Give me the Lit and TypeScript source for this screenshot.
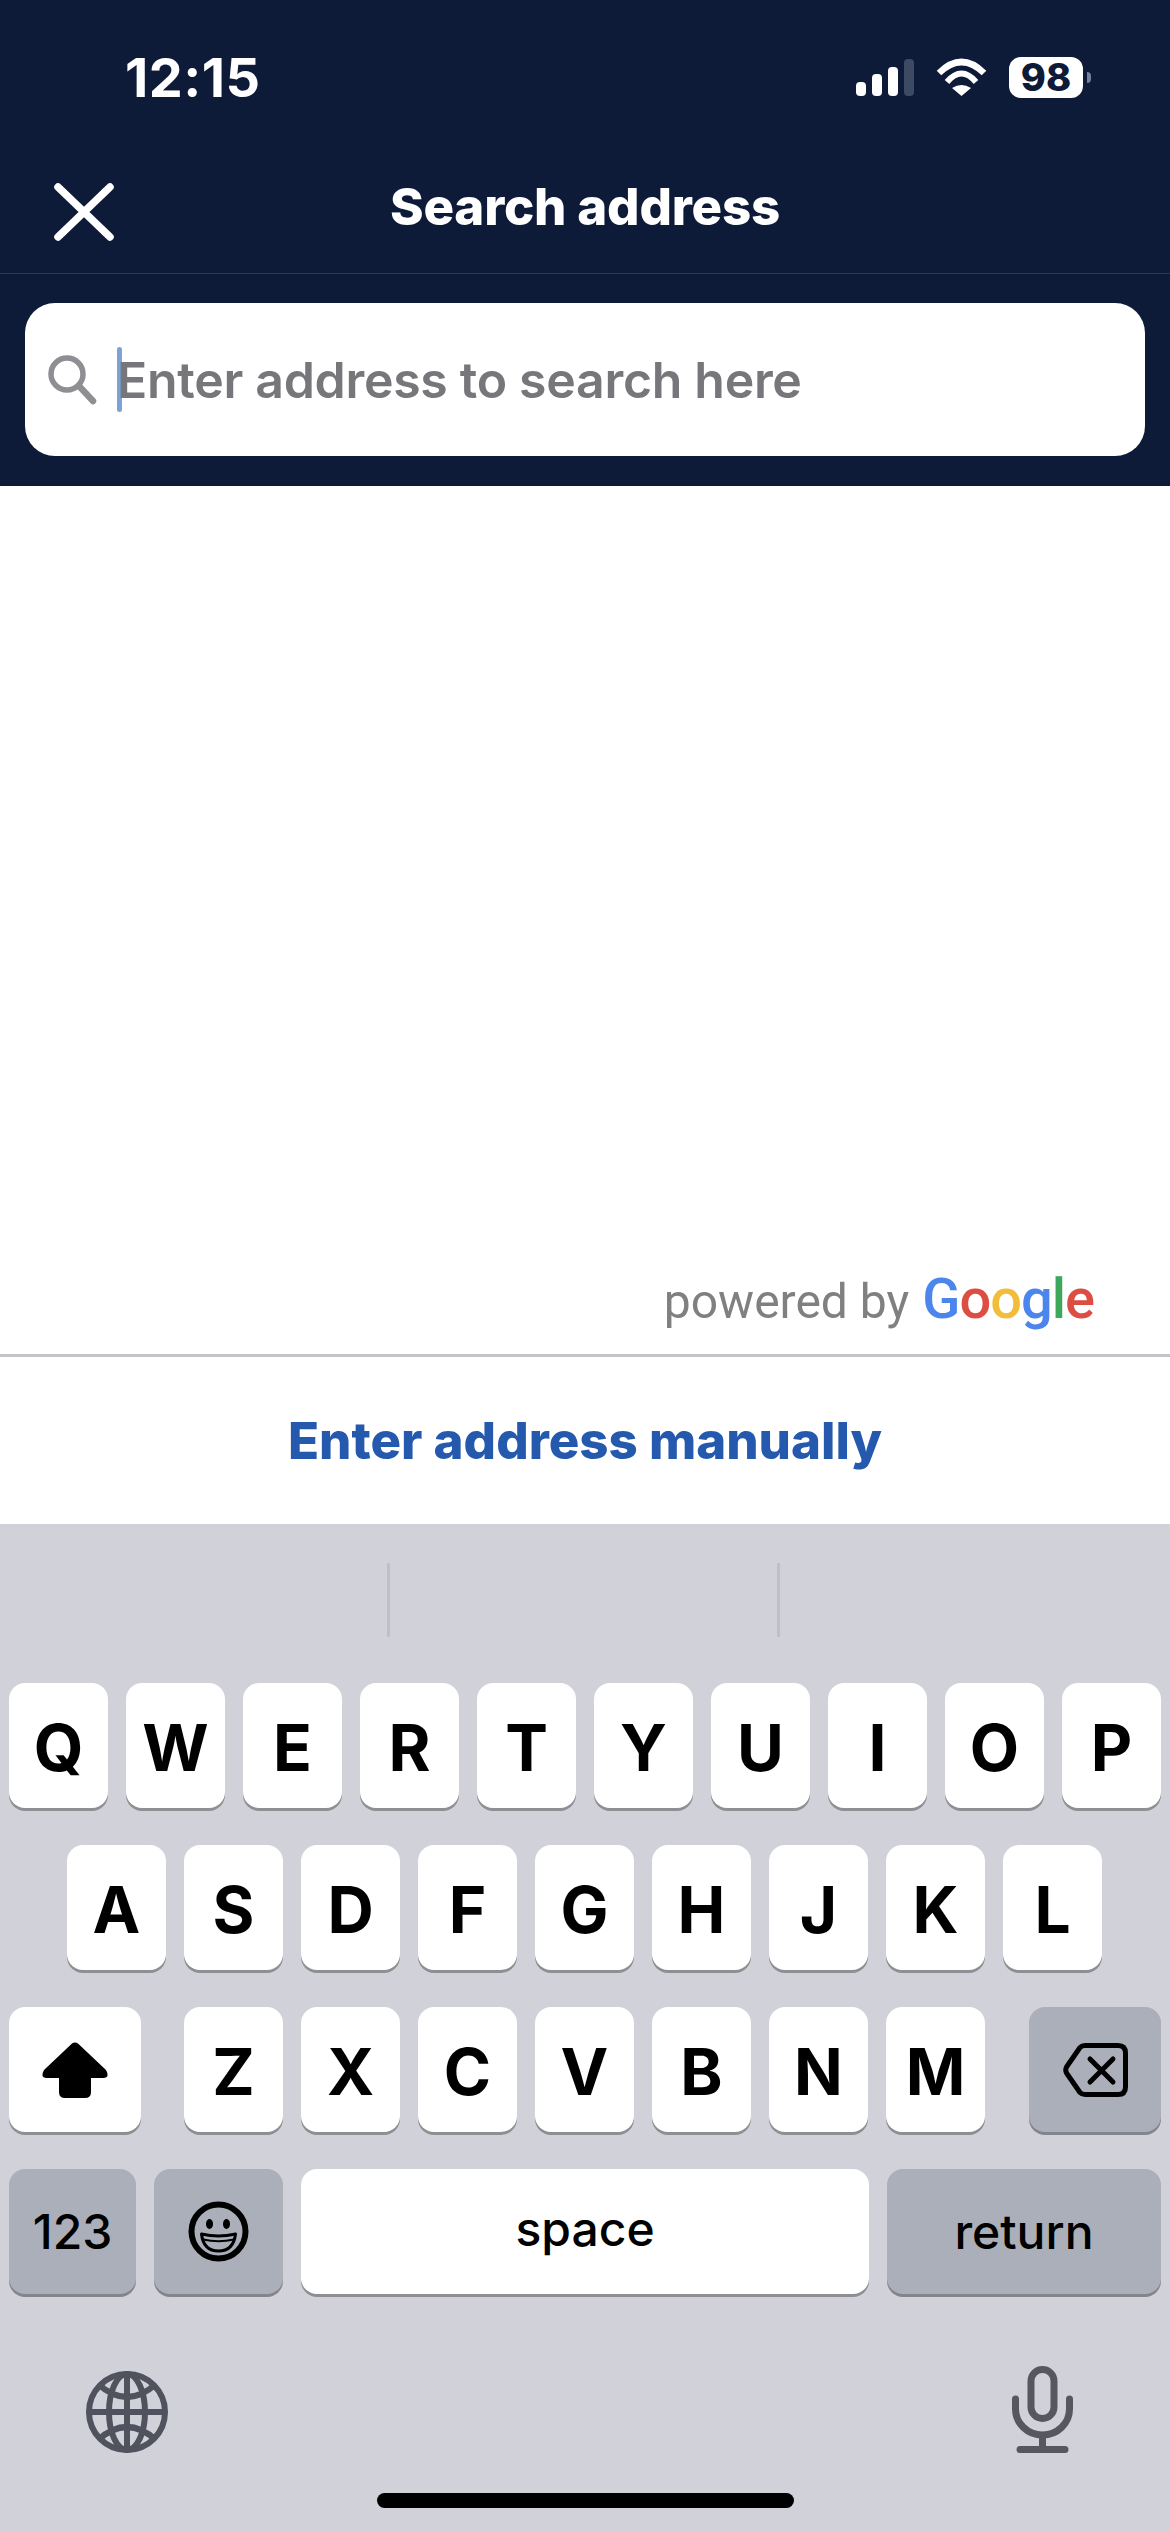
import { LitElement, html, css } from "lit";
import { customElement } from "lit/decorators.js";

const ROW_1 = ["Q", "W", "E", "R", "T", "Y", "U", "I", "O", "P"];
const ROW_2 = ["A", "S", "D", "F", "G", "H", "J", "K", "L"];
const ROW_3 = ["Z", "X", "C", "V", "B", "N", "M"];

@customElement("app-root")
export class AppRoot extends LitElement {
  static styles = css`
    :host {
      display: block;
      width: 1170px;
      height: 2532px;
      overflow: hidden;
      background: #fff;
      font-family: Inter, "Liberation Sans", sans-serif;
    }

    svg {
      display: block;
      flex: none;
      overflow: visible;
    }

    .page {
      display: flex;
      flex-direction: column;
      height: 2532px;
    }

    /* header */
    .top {
      background: #0d1b38;
      color: #fff;
    }

    .status {
      height: 150px;
      box-sizing: border-box;
      display: flex;
      justify-content: space-between;
      padding: 57px 79px 0 125px;
    }

    .time {
      font-size: 54px;
      font-weight: 700;
      line-height: 42px;
      letter-spacing: 0.5px;
    }

    .status-icons {
      display: flex;
      align-items: flex-start;
      height: 41px;
    }

    .signal {
      display: flex;
      align-items: flex-end;
      gap: 6px;
      height: 37px;
      margin-top: 2px;
    }

    .signal i {
      display: block;
      width: 10px;
      background: #fff;
      border-radius: 4px;
    }

    .signal i.off {
      background: #3d4a64;
    }

    .wifi {
      margin: 2px 22px 0 22px;
    }

    .battery {
      width: 74px;
      height: 41px;
      border-radius: 12px;
      background: #fff;
      color: #0d1b38;
      font-size: 38px;
      font-weight: 800;
      line-height: 41px;
      text-align: center;
    }

    .nub {
      width: 4px;
      height: 11px;
      margin: 15px 0 0 4px;
      border-radius: 0 6px 6px 0;
      background: #75809a;
    }

    .nav {
      height: 123px;
      display: grid;
      grid-template-columns: 1fr auto 1fr;
      align-items: center;
      padding-left: 54px;
      padding-right: 54px;
      border-bottom: 1px solid #2a3652;
    }

    .title {
      margin-bottom: 10px;
      font-size: 51px;
      font-weight: 800;
      letter-spacing: -0.2px;
    }

    .search-wrap {
      padding: 29px 25px 30px;
    }

    .search {
      height: 153px;
      border-radius: 30px;
      background: #fff;
      display: flex;
      align-items: center;
      padding-left: 22px;
    }

    .caret {
      width: 5px;
      height: 65px;
      margin-left: 20px;
      border-radius: 3px;
      background: #7ba3d8;
    }

    .placeholder {
      margin-left: -5px;
      font-size: 50px;
      font-weight: 600;
      letter-spacing: -0.3px;
      color: #77767b;
    }

    /* results */
    .results {
      flex: none;
      height: 868px;
      display: flex;
      align-items: flex-end;
      justify-content: flex-end;
      padding-right: 76px;
      box-sizing: border-box;
    }

    .powered {
      display: flex;
      align-items: baseline;
      gap: 13px;
      margin-bottom: 22px;
      font-family: Roboto, sans-serif;
      color: #808080;
      font-size: 48px;
      filter: blur(0.5px);
    }

    .google {
      font-size: 56px;
      font-weight: 500;
      letter-spacing: -1px;
    }

    .g-blue { color: #4c86ed; }
    .g-red { color: #dc4e41; }
    .g-yellow { color: #f3bd3c; }
    .g-green { color: #3da85a; }

    .manual {
      flex: none;
      height: 167px;
      border-top: 3px solid #c4c3c8;
      display: flex;
      align-items: center;
      justify-content: center;
      font-size: 51px;
      font-weight: 800;
      color: #2459ae;
    }

    /* keyboard */
    .keyboard {
      flex: 1;
      background: #d1d1d9;
      padding-top: 39px;
    }

    .suggest {
      height: 74px;
      display: grid;
      grid-template-columns: 387px 390px 1fr;
      margin-bottom: 46px;
    }

    .suggest div + div {
      border-left: 3px solid #bfbfc8;
    }

    .rows {
      display: flex;
      flex-direction: column;
      gap: 37px;
    }

    .row {
      display: flex;
      gap: 18px;
      padding: 0 9px;
    }

    .row.home {
      padding-left: 67px;
    }

    .key {
      flex: none;
      width: 99px;
      height: 125px;
      box-sizing: border-box;
      display: flex;
      align-items: center;
      justify-content: center;
      padding-top: 3px;
      border-radius: 16px;
      background: #fff;
      box-shadow: 0 3px 0 #8e8e93;
      color: #000;
      font-size: 64px;
      font-weight: 700;
    }

    .key.icon {
      padding-top: 0;
    }

    .key.shift {
      width: 132px;
      margin-right: 25px;
    }

    .key.back {
      width: 132px;
      margin-left: 26px;
    }

    .key.dark {
      background: #abafba;
      box-shadow: 0 3px 0 #84848c;
    }

    .key.label {
      padding-top: 0;
      font-size: 48px;
      font-weight: 500;
    }

    .key.w-123 { width: 127px; }
    .key.w-emoji { width: 129px; }
    .key.w-space { width: 568px; padding-bottom: 6px; }
    .key.w-return { width: 274px; }

    .tools {
      display: flex;
      justify-content: space-between;
      align-items: flex-end;
      margin-top: 72px;
      padding: 0 97px 0 86px;
    }

    .home-bar {
      width: 417px;
      height: 15px;
      margin: 40px 0 0 377px;
      border-radius: 8px;
      background: #000;
    }
  `;

  private renderStatus() {
    return html`
      <div class="status">
        <div class="time">12:15</div>
        <div class="status-icons">
          <div class="signal">
            <i style="height:14px"></i>
            <i style="height:22px"></i>
            <i style="height:29px"></i>
            <i class="off" style="height:37px"></i>
          </div>
          <svg class="wifi" width="51" height="37" viewBox="0 0 51 37" fill="none" stroke="#fff">
            <path d="M3 14 Q25.5 -8 48 14" stroke-width="6.5" />
            <path d="M11 23 Q25.5 6 40 23" stroke-width="6" />
            <path d="M25.5 37 L16 29 Q25.5 23 35 29 Z" fill="#fff" stroke="none" />
          </svg>
          <div class="battery">98</div>
          <div class="nub"></div>
        </div>
      </div>
    `;
  }

  private renderNav() {
    return html`
      <div class="nav">
        <svg width="60" height="58" viewBox="0 0 60 58" fill="none" stroke="#fff" stroke-width="7.5" stroke-linecap="round">
          <path d="M4 4 L56 54 M56 4 L4 54" />
        </svg>
        <div class="title">Search address</div>
      </div>
    `;
  }

  private renderSearch() {
    return html`
      <div class="search-wrap">
        <div class="search">
          <svg width="50" height="49" viewBox="0 0 50 49" fill="none" stroke="#8e8e93" stroke-linecap="round">
            <circle cx="20" cy="19" r="16" stroke-width="5.5" />
            <path d="M32 31 L46 46" stroke-width="6.5" />
          </svg>
          <div class="caret"></div>
          <div class="placeholder">Enter address to search here</div>
        </div>
      </div>
    `;
  }

  private renderKeyboard() {
    return html`
      <div class="keyboard">
        <div class="suggest"><div></div><div></div><div></div></div>
        <div class="rows">
          <div class="row">
            ${ROW_1.map((k) => html`<div class="key">${k}</div>`)}
          </div>
          <div class="row home">
            ${ROW_2.map((k) => html`<div class="key">${k}</div>`)}
          </div>
          <div class="row">
            <div class="key icon shift">
              <svg width="66" height="56" viewBox="0 0 66 56" fill="#000">
                <path d="M30 1.5 Q33 -0.5 36 1.5 L64 28 Q68 35 62 36 H49 V50 Q49 56 43 56 H23 Q17 56 17 50 V36 H4 Q-2 35 2 28 Z" />
              </svg>
            </div>
            ${ROW_3.map((k) => html`<div class="key">${k}</div>`)}
            <div class="key icon dark back">
              <svg width="65" height="54" viewBox="0 0 65 54" fill="none" stroke="#000" stroke-width="5" stroke-linecap="round" stroke-linejoin="round">
                <path d="M22 2.5 H55 Q62.5 2.5 62.5 10 V44 Q62.5 51.5 55 51.5 H22 Q19 51.5 17 49.5 L3.5 30 Q2 27 3.5 24 L17 4.5 Q19 2.5 22 2.5 Z" />
                <path d="M27 16 L50 39 M50 16 L27 39" />
              </svg>
            </div>
          </div>
          <div class="row">
            <div class="key dark label w-123">123</div>
            <div class="key icon dark w-emoji">
              <svg width="61" height="61" viewBox="0 0 61 61" fill="none" stroke="#000">
                <circle cx="30.5" cy="30.5" r="27" stroke-width="6" />
                <ellipse cx="21.5" cy="23" rx="3.5" ry="5" fill="#000" stroke="none" />
                <ellipse cx="38.5" cy="23" rx="3.5" ry="5" fill="#000" stroke="none" />
                <path d="M13.5 33 Q30.5 37 47.5 33 Q45.5 50 30.5 50 Q15.5 50 13.5 33 Z" stroke-width="3" stroke-linejoin="round" />
                <path d="M15 38.5 Q30.5 42 46 38.5" stroke-width="2" />
              </svg>
            </div>
            <div class="key label w-space">space</div>
            <div class="key dark label w-return">return</div>
          </div>
        </div>
        <div class="tools">
          <svg width="82" height="82" viewBox="0 0 82 82" fill="none" stroke="#50525d" stroke-width="6">
            <circle cx="41" cy="41" r="38" />
            <ellipse cx="41" cy="41" rx="18" ry="38" />
            <path d="M41 3 V79 M3 41 H79" />
            <path d="M12 13 Q41 39 70 13 M12 69 Q41 43 70 69" />
          </svg>
          <svg width="61" height="87" viewBox="0 0 61 87" fill="none" stroke="#56575f" stroke-width="7" stroke-linecap="round">
            <rect x="19" y="3.5" width="23" height="49" rx="11.5" />
            <path d="M3.5 33 V43 a27 26 0 0 0 54 0 V33" />
            <path d="M30.5 70 V83.5 M8 83.5 H53" />
          </svg>
        </div>
        <div class="home-bar"></div>
      </div>
    `;
  }

  render() {
    return html`
      <div class="page">
        <div class="top">
          ${this.renderStatus()} ${this.renderNav()} ${this.renderSearch()}
        </div>
        <div class="results">
          <div class="powered">
            <span>powered by</span>
            <span class="google"><span class="g-blue">G</span><span class="g-red">o</span><span class="g-yellow">o</span><span class="g-blue">g</span><span class="g-green">l</span><span class="g-red">e</span></span>
          </div>
        </div>
        <div class="manual">Enter address manually</div>
        ${this.renderKeyboard()}
      </div>
    `;
  }
}
